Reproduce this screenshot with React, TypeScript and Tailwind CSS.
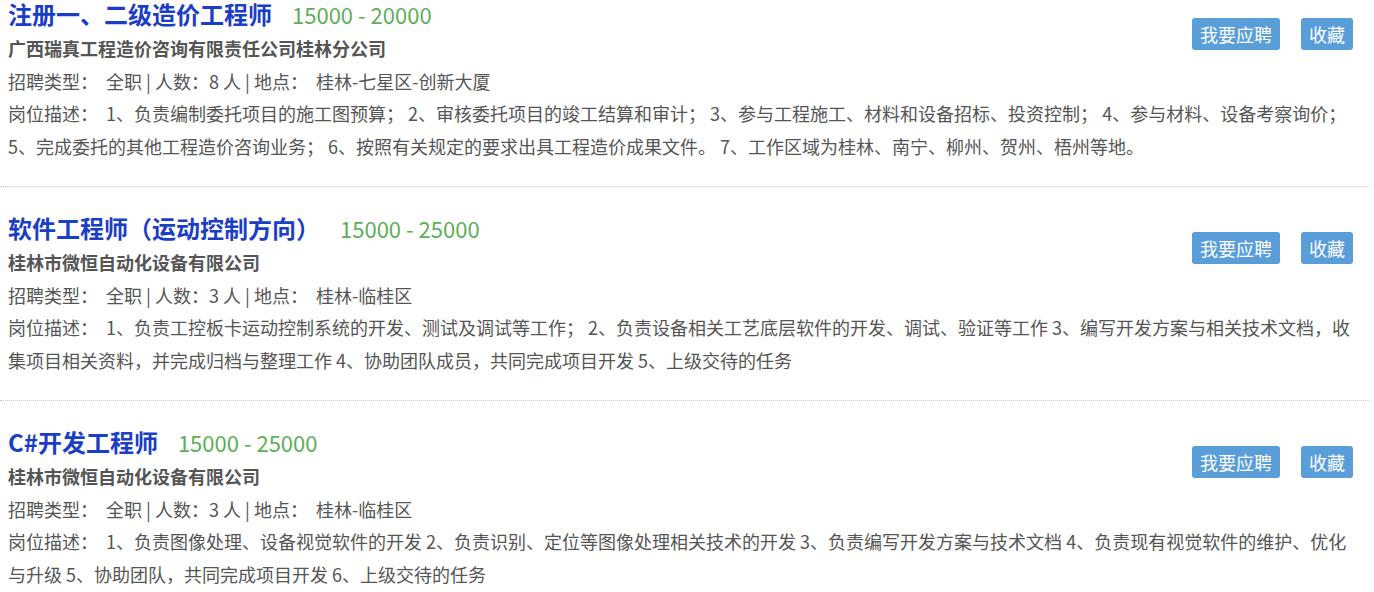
const jobs = [
  {
    title: '注册一、二级造价工程师',
    salary: '15000 - 20000',
    company: '广西瑞真工程造价咨询有限责任公司桂林分公司',
    count: 8,
    place: '桂林-七星区-创新大厦',
    desc: '1、负责编制委托项目的施工图预算； 2、审核委托项目的竣工结算和审计； 3、参与工程施工、材料和设备招标、投资控制； 4、参与材料、设备考察询价； 5、完成委托的其他工程造价咨询业务； 6、按照有关规定的要求出具工程造价成果文件。 7、工作区域为桂林、南宁、柳州、贺州、梧州等地。',
  },
  {
    title: '软件工程师（运动控制方向）',
    salary: '15000 - 25000',
    company: '桂林市微恒自动化设备有限公司',
    count: 3,
    place: '桂林-临桂区',
    desc: '1、负责工控板卡运动控制系统的开发、测试及调试等工作； 2、负责设备相关工艺底层软件的开发、调试、验证等工作 3、编写开发方案与相关技术文档，收集项目相关资料，并完成归档与整理工作 4、协助团队成员，共同完成项目开发 5、上级交待的任务',
  },
  {
    title: 'C#开发工程师',
    salary: '15000 - 25000',
    company: '桂林市微恒自动化设备有限公司',
    count: 3,
    place: '桂林-临桂区',
    desc: '1、负责图像处理、设备视觉软件的开发 2、负责识别、定位等图像处理相关技术的开发 3、负责编写开发方案与技术文档 4、负责现有视觉软件的维护、优化与升级 5、协助团队，共同完成项目开发 6、上级交待的任务',
  },
]

export default function App() {
  return (
    <div className="h-[592px] overflow-hidden bg-white font-['Noto_Sans_CJK_SC','Noto_Sans',sans-serif]">
      <div className="-mt-[27px] w-[1370px]">
        {jobs.map((job, i) => (
          <div key={i} className="border-b border-dotted border-[#c8c8c8] pl-2 pr-[14px] pt-6 pb-[23px]">
            <div className="flex items-start justify-between">
              <div>
                <div className="flex items-center gap-5 h-[34px]">
                  <span className="text-[24px] font-bold text-[#1b3ec6] leading-[34px]">{job.title}</span>
                  <span className="text-[22px] text-[#5dae58] leading-[34px]">{job.salary}</span>
                </div>
                <div className="text-[18px] font-bold text-[#555] leading-[34px]">{job.company}</div>
                <div className="text-[18px] text-[#555] leading-[32px]">
                  招聘类型：&nbsp; 全职 | 人数：{job.count} 人 | 地点：&nbsp; {job.place}
                </div>
              </div>
              <div className="flex gap-[21px] pt-[21px] pr-[3px]">
                <button className="h-8 px-2 rounded-[3px] bg-[#5a9ed9] text-white text-[18px] leading-8">
                  我要应聘
                </button>
                <button className="h-8 px-2 rounded-[3px] bg-[#5a9ed9] text-white text-[18px] leading-8">
                  收藏
                </button>
              </div>
            </div>
            <p className="text-[18px] text-[#555] leading-[33px]">
              岗位描述：&nbsp; {job.desc}
            </p>
          </div>
        ))}
      </div>
    </div>
  )
}
